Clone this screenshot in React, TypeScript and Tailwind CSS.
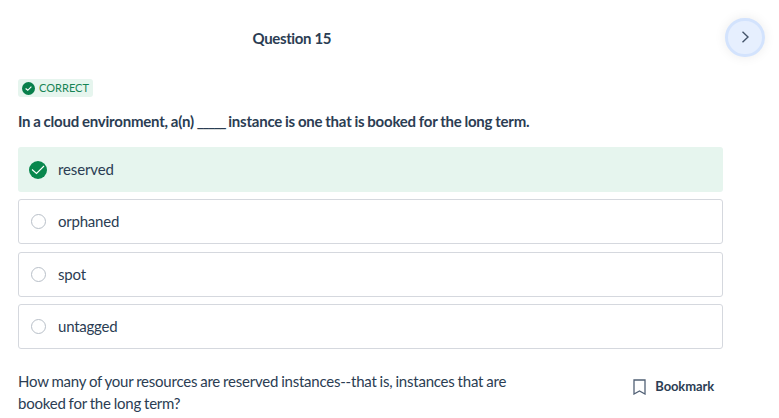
function Option({ label, spacing }: { label: string; spacing: string }) {
  return (
    <div className="flex h-[45.2px] items-center rounded-[3px] border border-[#d5d8de] pl-3">
      <span className="h-[15px] w-[15px] rounded-full border border-[#b8bfc8]" />
      <span className={`mb-px ml-3 text-[15px] leading-5 ${spacing}`}>{label}</span>
    </div>
  );
}

export default function App() {
  return (
    <div className="h-[418px] w-[779px] overflow-hidden bg-white font-[Lato,sans-serif] text-[#2b3d53]">
      <header className="flex h-[75px] items-start pl-[252.500px] pr-[14px] pt-[18px]">
        <h1 className="mt-[10px] text-[15px] font-bold leading-5 tracking-[-0.36px]">Question 15</h1>
        <button className="ml-auto flex h-[39px] w-10 items-center justify-center rounded-full border-[3px] border-[#d3e3fd] bg-[#e6effe] pb-px shadow-[0_0_12px_rgba(0,0,0,0.08)]">
          <svg width="8" height="12" viewBox="0 0 8 12" fill="none" stroke="#44546a" strokeWidth="1.4"><path d="M1.500 .8L7 6l-5.500 5.200" /></svg>
        </button>
      </header>
      <main className="ml-[18px] w-[705px] pt-1">
        <div className="flex h-[18px] w-[75px] items-center rounded-[3px] bg-[#e6f5ee] pl-1 text-[#168454]">
          <svg width="13" height="13" viewBox="0 0 18 18"><circle cx="9" cy="9" r="9" fill="#087f4b" /><path d="M5 9l3 2.500 5-5" fill="none" stroke="white" strokeWidth="1.6" /></svg>
          <span className="ml-1 text-[11px] leading-4 tracking-[0.03px]">CORRECT</span>
        </div>
        <p className="mt-[14px] whitespace-nowrap text-[15px] font-bold leading-5 tracking-[-0.22px] [word-spacing:-0.5px]">
          In a cloud environment, a(n) <span className="tracking-[-1.3px]">_____</span> instance is one that is booked for the long term.
        </p>
        <div className="mt-4 flex flex-col gap-[7.3px]">
          <div className="flex h-[45px] items-center rounded-[3px] bg-[#e6f5ee] pl-[11px]">
            <svg width="18" height="18" viewBox="0 0 18 18"><circle cx="9" cy="9" r="9" fill="#08874d" /><path d="M3 8.500l4.500 4 7.500-7.500" fill="none" stroke="white" strokeWidth="1.1" /></svg>
            <span className="mb-0.5 ml-[11px] text-[15px] leading-5 tracking-[-0.13px]">reserved</span>
          </div>
          <Option label="orphaned" spacing="tracking-[-0.23px]" />
          <Option label="spot" spacing="tracking-[-0.15px]" />
          <Option label="untagged" spacing="tracking-[-0.23px]" />
        </div>
        <footer className="mt-[20.700px] flex items-start">
          <p className="whitespace-nowrap text-[15px] leading-[22px] tracking-[-0.22px] [word-spacing:-0.6px]">
            How many of your resources are reserved instances--that is, instances that are<br />booked for the long term?
          </p>
          <button className="ml-auto mr-[9px] mt-[6px] flex items-center gap-[9px] text-[13px] font-bold leading-5 tracking-[-0.12px]">
            <svg className="mt-px" width="13" height="16" viewBox="0 0 13 16" fill="none" stroke="#526176" strokeWidth="1.3"><path d="M1 1h11v14l-5.500-3-5.500 3z" /></svg>
            Bookmark
          </button>
        </footer>
      </main>
    </div>
  );
}
